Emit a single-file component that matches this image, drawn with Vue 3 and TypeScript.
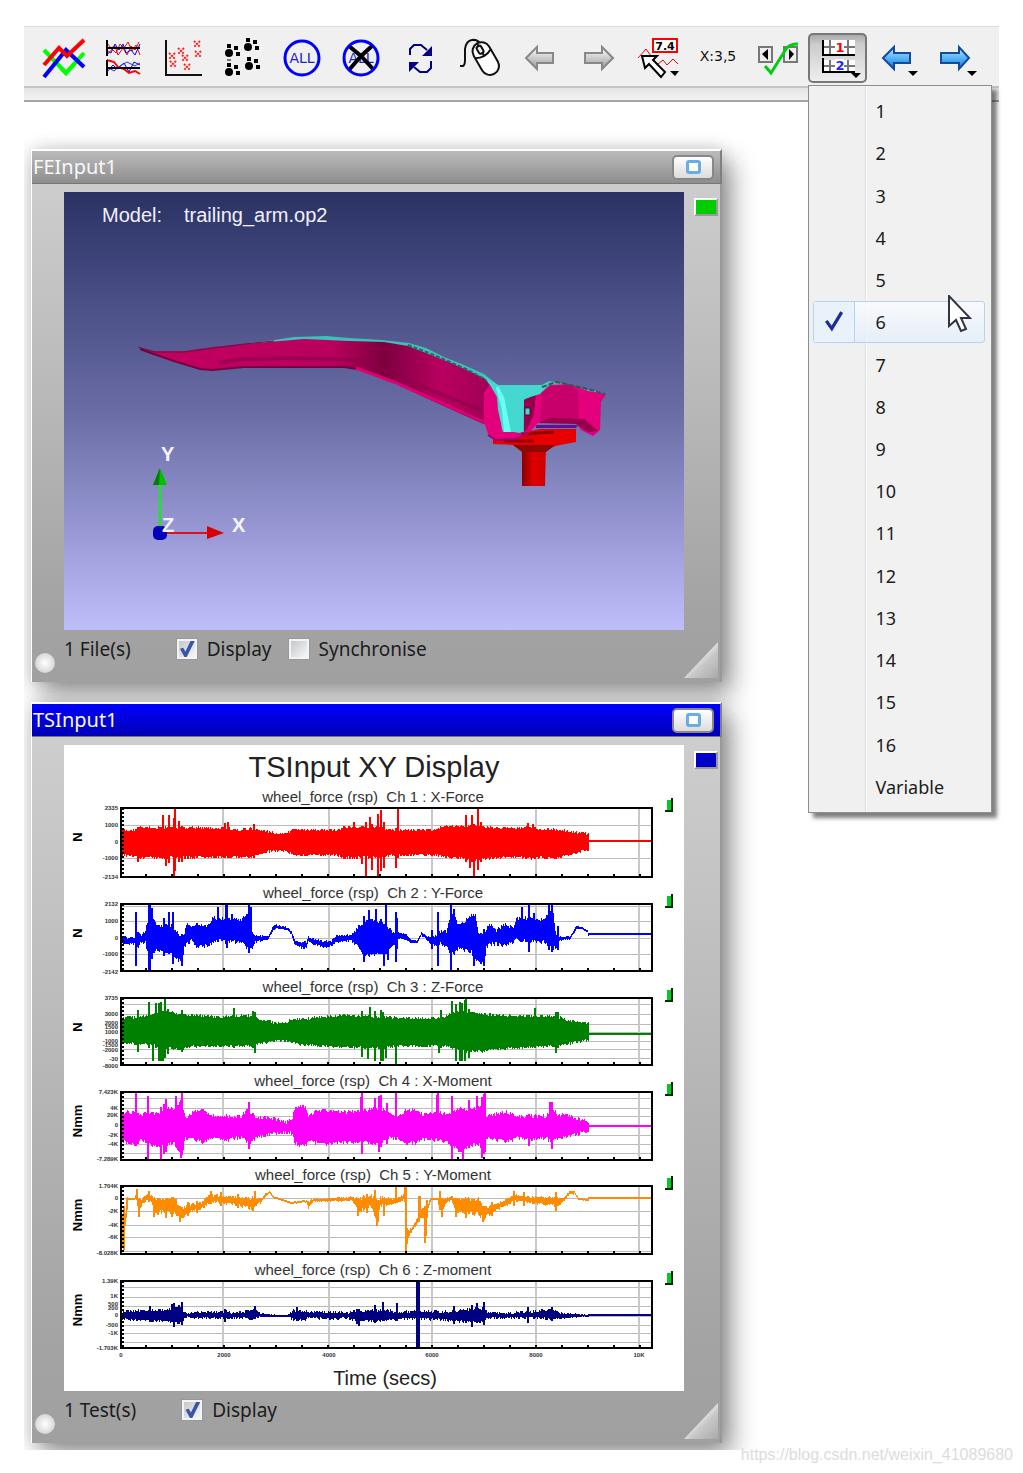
<script setup lang="ts">
import { ref } from 'vue'

type Span = [x: number, top: number, bottom: number]

interface Channel {
  title: string
  unit: string
  y: number
  height: number
  color: string
  rest: number
  grain: number
  grid: number[]
  ticks: [at: number, label: string][]
  envelope: Span[]
  spikes: Span[]
}

const layouts = [...Array.from({ length: 16 }, (_, i) => String(i + 1)), 'Variable']
const selected = ref('6')
const feDisplay = ref(true)
const feSync = ref(false)
const tsDisplay = ref(true)

const plotLeft = 57
const plotWidth = 531
const dataEnd = 467
const columns = [102, 208, 311, 415, 518]
const minorTicks = Array.from({ length: 20 }, (_, i) => (i + 1) * 26 - 1)
const timeLabels: [number, string][] = [[0, '0'], [103, '2000'], [208, '4000'], [311, '6000'], [415, '8000'], [518, '10K']]

const channels: Channel[] = [
  {
    title: 'wheel_force (rsp)\u00a0 Ch 1 : X-Force', unit: 'N', y: 63, height: 69, color: '#ff0000', rest: 33, grain: 3,
    grid: [17, 50],
    ticks: [[0, '2335'], [17, '1000'], [34, '0'], [50, '-1000'], [69, '-2134']],
    envelope: [[0, 22, 47], [12, 22, 48], [18, 19, 50], [100, 20, 49], [120, 22, 49], [130, 20, 49], [145, 23, 44], [152, 25, 43], [165, 25, 43], [173, 22, 47], [215, 22, 47], [222, 19, 50], [260, 19, 49], [270, 22, 47], [315, 22, 47], [322, 18, 49], [360, 18, 52], [370, 20, 50], [400, 20, 49], [410, 19, 51], [420, 22, 49], [430, 21, 51], [440, 22, 49], [450, 24, 46], [462, 25, 43], [467, 26, 42]],
    spikes: [[41, 7, 50], [44, 20, 58], [47, 7, 55], [52, 10, 69], [53, 0, 63], [57, 13, 54], [60, 18, 54], [103, 15, 50], [106, 14, 50], [16, 20, 54], [132, 16, 50], [232, 14, 50], [240, 18, 56], [244, 14, 69], [248, 9, 50], [250, 16, 62], [256, 6, 69], [259, 2, 63], [262, 14, 60], [274, 20, 60], [276, 0, 50], [344, 7, 54], [348, 18, 60], [350, 7, 54], [352, 16, 69], [356, 0, 62], [359, 14, 54], [406, 15, 50], [411, 16, 50]],
  },
  {
    title: 'wheel_force (rsp)\u00a0 Ch 2 : Y-Force', unit: 'N', y: 159, height: 67, color: '#0000ff', rest: 30, grain: 4,
    grid: [2, 17, 34, 50],
    ticks: [[0, '2132'], [17, '1000'], [34, '0'], [50, '-1000'], [68, '-2142']],
    envelope: [[0, 31, 39], [6, 34, 40], [13, 33, 40], [16, 28, 44], [19, 31, 39], [24, 27, 38], [27, 14, 52], [31, 12, 50], [35, 22, 45], [42, 22, 48], [50, 22, 50], [54, 26, 54], [61, 34, 58], [63, 28, 44], [65, 19, 40], [70, 22, 37], [75, 20, 42], [85, 22, 42], [92, 14, 38], [100, 14, 36], [110, 15, 38], [120, 16, 38], [126, 8, 44], [129, 10, 44], [131, 28, 44], [134, 32, 38], [147, 32, 35], [152, 22, 26], [155, 21, 24], [165, 23, 26], [170, 27, 30], [173, 36, 40], [180, 38, 44], [185, 38, 44], [187, 33, 37], [192, 35, 40], [200, 37, 43], [210, 37, 42], [215, 32, 38], [230, 30, 37], [236, 24, 42], [242, 18, 50], [247, 16, 52], [258, 18, 48], [264, 22, 48], [272, 28, 42], [277, 28, 34], [285, 31, 36], [290, 36, 39], [296, 36, 39], [300, 28, 31], [305, 32, 36], [310, 34, 40], [320, 27, 40], [325, 28, 43], [329, 10, 50], [332, 10, 50], [337, 22, 44], [350, 12, 48], [354, 12, 56], [357, 30, 58], [363, 32, 60], [365, 26, 44], [368, 19, 40], [375, 26, 40], [383, 20, 42], [392, 24, 38], [395, 15, 36], [410, 14, 38], [424, 16, 38], [427, 6, 44], [432, 8, 44], [434, 28, 44], [438, 33, 37], [449, 32, 35], [455, 22, 25], [460, 23, 25], [466, 26, 28], [467, 29, 32]],
    spikes: [[14, 8, 62], [27, 0, 68], [28, 0, 68], [30, 4, 55], [42, 14, 52], [47, 8, 50], [51, 8, 60], [60, 30, 62], [96, 3, 38], [104, 0, 40], [105, 0, 44], [110, 10, 36], [127, 0, 49], [129, 3, 44], [242, 12, 58], [247, 6, 50], [254, 5, 48], [259, 15, 50], [264, 0, 50], [262, 20, 62], [266, 25, 56], [274, 8, 58], [275, 14, 45], [310, 26, 45], [316, 8, 62], [329, 0, 68], [332, 5, 50], [352, 20, 62], [362, 25, 62], [400, 3, 38], [407, 0, 48], [412, 9, 36], [427, 0, 46], [430, 0, 48], [436, 22, 46]],
  },
  {
    title: 'wheel_force (rsp)\u00a0 Ch 3 : Z-Force', unit: 'N', y: 253, height: 67, color: '#008000', rest: 36, grain: 3,
    grid: [6, 16, 26, 34, 43, 51, 60],
    ticks: [[0, '3735'], [16, '3000'], [25, '2000'], [29, '1500'], [34, '1000'], [43, '-1000'], [47, '-1500'], [52, '-2000'], [61, '-30'], [68, '-8000']],
    envelope: [[0, 20, 45], [15, 19, 46], [30, 17, 46], [35, 14, 48], [45, 13, 50], [60, 16, 51], [70, 17, 49], [100, 19, 48], [130, 17, 48], [136, 21, 46], [145, 23, 45], [155, 25, 43], [165, 24, 43], [172, 21, 45], [180, 21, 47], [220, 17, 49], [255, 19, 50], [280, 20, 48], [320, 20, 48], [333, 14, 50], [345, 13, 52], [360, 16, 54], [372, 17, 51], [400, 18, 50], [435, 18, 48], [445, 22, 46], [455, 24, 44], [467, 25, 42]],
    spikes: [[16, 12, 54], [27, 4, 50], [31, 16, 63], [34, 5, 50], [37, 5, 63], [39, 4, 63], [41, 14, 63], [43, 1, 60], [46, 11, 56], [60, 12, 54], [112, 10, 50], [131, 13, 50], [133, 14, 55], [240, 13, 59], [246, 18, 61], [248, 9, 50], [253, 13, 63], [259, 12, 63], [261, 14, 63], [264, 20, 60], [274, 19, 68], [317, 20, 55], [319, 12, 50], [330, 3, 50], [334, 6, 63], [338, 4, 63], [340, 5, 63], [343, 2, 63], [344, 1, 55], [347, 11, 60], [413, 10, 50], [434, 14, 55], [436, 14, 50]],
  },
  {
    title: 'wheel_force (rsp)\u00a0 Ch 4 : X-Moment', unit: 'Nmm', y: 347, height: 68, color: '#ff00ff', rest: 34, grain: 4,
    grid: [6, 16, 24, 34, 43, 52, 61],
    ticks: [[0, '7.423K'], [16, '4K'], [23, '20K'], [33, '0'], [43, '-2K'], [52, '-4K'], [67, '-7.289K']],
    envelope: [[0, 20, 48], [10, 20, 52], [15, 18, 54], [18, 24, 48], [25, 20, 50], [35, 22, 55], [45, 16, 54], [52, 16, 50], [57, 12, 60], [61, 12, 62], [64, 26, 46], [72, 20, 47], [82, 18, 51], [90, 23, 46], [105, 24, 48], [120, 25, 45], [125, 18, 50], [130, 21, 50], [135, 26, 46], [150, 26, 42], [165, 30, 40], [170, 28, 41], [174, 16, 52], [184, 14, 54], [187, 24, 48], [195, 19, 51], [205, 18, 52], [220, 20, 50], [240, 19, 50], [259, 16, 53], [266, 21, 46], [280, 24, 47], [285, 18, 51], [295, 18, 51], [302, 23, 47], [315, 19, 48], [326, 22, 50], [340, 16, 60], [350, 18, 53], [358, 15, 52], [361, 8, 62], [364, 24, 46], [385, 20, 50], [395, 24, 46], [410, 24, 48], [425, 24, 46], [430, 14, 50], [436, 22, 46], [450, 25, 44], [467, 30, 39]],
    spikes: [[14, 1, 54], [26, 4, 67], [39, 15, 68], [42, 12, 62], [44, 7, 60], [54, 4, 54], [59, 8, 66], [60, 1, 60], [127, 10, 57], [239, 5, 48], [240, 0, 62], [253, 6, 52], [257, 4, 60], [259, 3, 55], [265, 11, 52], [274, 0, 48], [315, 3, 46], [316, 0, 48], [330, 4, 68], [341, 20, 68], [347, 8, 56], [355, 4, 52], [360, 5, 66], [362, 2, 62], [363, 0, 60], [407, 22, 54], [428, 10, 46], [430, 10, 57]],
  },
  {
    title: 'wheel_force (rsp)\u00a0 Ch 5 : Y-Moment', unit: 'Nmm', y: 441, height: 68, color: '#ff8c00', rest: 12, grain: 4,
    grid: [12, 25, 39, 51, 65],
    ticks: [[0, '1.704K'], [12, '0'], [25, '-2K'], [39, '-4K'], [51, '-6K'], [67, '-8.028K']],
    envelope: [[0, 48, 55], [3, 40, 48], [5, 14, 32], [7, 12, 13], [13, 12, 13], [15, 6, 14], [17, 14, 26], [20, 13, 20], [25, 9, 14], [30, 10, 16], [32, 13, 26], [54, 12, 27], [58, 22, 33], [62, 21, 31], [70, 18, 25], [80, 17, 23], [86, 10, 18], [90, 9, 16], [110, 11, 18], [130, 12, 22], [140, 12, 16], [144, 8, 11], [148, 5, 7], [152, 10, 12], [170, 16, 17], [185, 14, 16], [187, 15, 23], [192, 13, 16], [210, 12, 15], [230, 11, 15], [238, 12, 25], [250, 10, 20], [255, 14, 34], [259, 11, 20], [270, 13, 18], [278, 11, 16], [283, 8, 14], [286, 46, 56], [290, 42, 46], [296, 32, 38], [299, 22, 32], [303, 22, 30], [306, 18, 26], [310, 12, 13], [316, 12, 14], [318, 8, 22], [321, 14, 24], [325, 12, 17], [330, 10, 14], [334, 13, 26], [357, 13, 28], [362, 22, 32], [375, 18, 24], [385, 14, 20], [392, 9, 15], [410, 11, 17], [435, 12, 20], [442, 12, 16], [448, 5, 8], [453, 5, 8], [457, 12, 13], [467, 13, 14]],
    spikes: [[1, 28, 62], [2, 20, 64], [15, 3, 14], [17, 13, 31], [27, 5, 14], [32, 12, 31], [36, 12, 29], [44, 12, 32], [50, 11, 31], [58, 20, 36], [66, 16, 30], [75, 15, 27], [89, 5, 18], [99, 6, 20], [116, 8, 22], [133, 5, 16], [131, 12, 25], [236, 12, 30], [245, 8, 27], [253, 4, 26], [255, 14, 40], [256, 14, 36], [262, 12, 30], [274, 1, 14], [283, 1, 16], [284, 0, 68], [285, 42, 58], [297, 10, 34], [298, 10, 30], [303, 20, 57], [304, 22, 50], [305, 14, 32], [318, 5, 24], [320, 12, 31], [334, 12, 31], [344, 12, 32], [361, 20, 36], [362, 20, 34], [370, 16, 30], [392, 5, 20], [402, 6, 20], [434, 6, 25]],
  },
  {
    title: 'wheel_force (rsp)\u00a0 Ch 6 : Z-moment', unit: 'Nmm', y: 536, height: 67, color: '#000080', rest: 34, grain: 3,
    grid: [6, 16, 25, 35, 44, 52, 61],
    ticks: [[0, '1.39K'], [15, '1K'], [23, '500'], [27, '200'], [34, '0'], [44, '-500'], [52, '-1K'], [67, '-1.703K']],
    envelope: [[0, 31, 38], [10, 30, 39], [30, 29, 40], [45, 29, 40], [52, 26, 42], [60, 27, 42], [63, 31, 37], [66, 33, 36], [72, 31, 37], [100, 31, 37], [106, 30, 38], [110, 32, 37], [126, 30, 37], [133, 29, 38], [138, 32, 36], [155, 34, 36], [166, 34, 35], [172, 29, 39], [182, 30, 39], [187, 31, 37], [215, 31, 38], [225, 32, 37], [235, 30, 40], [240, 30, 40], [262, 29, 40], [280, 31, 38], [300, 30, 38], [325, 31, 39], [335, 30, 40], [350, 28, 41], [362, 27, 41], [366, 31, 37], [385, 32, 37], [405, 31, 37], [430, 29, 38], [438, 32, 38], [455, 33, 36], [467, 34, 35]],
    spikes: [[28, 25, 41], [50, 23, 40], [52, 22, 46], [57, 24, 43], [60, 21, 44], [103, 28, 41], [133, 25, 38], [175, 26, 40], [235, 28, 43], [237, 28, 45], [253, 24, 42], [261, 21, 40], [275, 22, 40], [295, 0, 68], [296, 0, 68], [297, 0, 68], [332, 25, 43], [350, 24, 46], [355, 22, 42], [362, 21, 44], [406, 26, 42], [430, 26, 40]],
  },
]

function trace(channel: Channel, seed: number): string {
  let state = seed
  const random = () => {
    state = (state * 1103515245 + 12345) % 2147483648
    return state / 2147483648
  }
  const bar = (x: number, top: number, bottom: number, width: number) => {
    const from = channel.y + Math.max(0, Math.round(top))
    const to = channel.y + Math.min(channel.height, Math.round(Math.max(bottom, top + 2)))
    return `M${plotLeft + x} ${from}h${width}V${to}h-${width}z`
  }
  const parts: string[] = []
  let segment = 0
  for (let x = 0; x <= dataEnd; x++) {
    while (segment < channel.envelope.length - 2 && channel.envelope[segment + 1][0] <= x) segment++
    const a = channel.envelope[segment]
    const b = channel.envelope[segment + 1]
    const t = (x - a[0]) / (b[0] - a[0])
    let top = a[1] + (b[1] - a[1]) * t
    let bottom = a[2] + (b[2] - a[2]) * t
    const grain = Math.min(channel.grain, (bottom - top) * 0.4)
    top += (random() - 0.5) * grain
    bottom += (random() - 0.5) * grain
    parts.push(bar(x, top, bottom, 1))
  }
  for (const [x, top, bottom] of channel.spikes) parts.push(bar(x, top, bottom, 2))
  return parts.join('')
}

const traces = channels.map((c, i) => trace(c, 97 + i * 31))

const scatter = [[14, 20], [15, 28], [23, 15], [27, 22], [29, 31], [39, 8], [40, 18]]
const clusters = [[12, 17], [31, 11], [12, 36], [32, 30]]
</script>

<template>
  <main class="page">
    <header class="toolbar" role="toolbar" aria-label="Graph tools">
      <button class="tool" aria-label="Overlay plots">
        <svg viewBox="0 0 50 44" fill="none" stroke-width="4">
          <path d="M5 14 27 37 45 17" stroke="#0f0" />
          <path d="M5 41 27 14 45 31" stroke="#00f" />
          <path d="M22 32 27 37 36 27" stroke="#0f0" />
          <path d="M5 29 20 12 28 20 45 4" stroke="#f00" />
        </svg>
      </button>
      <button class="tool" aria-label="Stacked plots">
        <svg viewBox="0 0 50 44" fill="none" stroke-width="1">
          <path d="M9 19 14 13 18 17 22 8 26 12 30 6 34 15 38 9 42 19M9 7 13 12 17 10 20 19 25 12 29 19 33 10 37 14 41 6" stroke="#f00" stroke-width="1" />
          <path d="M9 15 13 17 17 8 21 14 25 8 28 17 33 14 37 19 42 8M9 36 15 29 19 33 26 27 31 36 36 26 42 29" stroke="#00f" />
          <path d="M9 24 16 26 20 31 26 33 31 37 37 35 42 38" stroke="#f00" stroke-width="2" />
          <path d="M9 31 16 35 22 30 29 26 37 30 42 27" stroke="#33d" />
          <path d="M9 4V20M9 12H42M9 24V40M9 32H42" stroke="#000" stroke-width="2" />
        </svg>
      </button>
      <button class="tool" aria-label="Scatter plot">
        <svg viewBox="0 0 50 44" fill="none">
          <path d="M8 4V39H44" stroke="#111" stroke-width="2" />
          <path v-for="(p, i) in scatter" :key="i" :d="`M${p[0] - 3} ${p[1] - 3}l6 6m0-6l-6 6`" stroke="#f22" stroke-width="2" stroke-dasharray="2 1" />
        </svg>
      </button>
      <button class="tool" aria-label="Point clusters">
        <svg viewBox="0 0 50 44">
          <g v-for="(c, i) in clusters" :key="i">
            <circle :cx="c[0]" :cy="c[1]" r="4" />
            <path :d="`M${c[0] - 2} ${c[1] - 9}h4v4h-4zm7 2h4v4h-4zm2 6h4v4h-4z`" />
          </g>
          <path d="M10 24h4" stroke="#000" />
        </svg>
      </button>
      <button class="tool" aria-label="Select all">
        <svg viewBox="0 0 50 44">
          <circle cx="25" cy="22" r="17" fill="none" stroke="#00f" stroke-width="3" />
          <text x="25" y="27" text-anchor="middle" font-size="14" fill="#22c">ALL</text>
        </svg>
      </button>
      <button class="tool" aria-label="Select none">
        <svg viewBox="0 0 50 44">
          <text x="25" y="27" text-anchor="middle" font-size="14" fill="#22c">ALL</text>
          <path d="M13 10 25 20 36 10M13 34 25 20 37 33" fill="none" stroke="#000" stroke-width="4" />
          <circle cx="25" cy="22" r="17" fill="none" stroke="#00f" stroke-width="3" />
        </svg>
      </button>
      <button class="tool" aria-label="Refresh">
        <svg viewBox="0 0 50 44" fill="#000080">
          <path d="M14 19V13L18 9H25L31 14M35 25V32L31 36H24L18 31" fill="none" stroke="#000080" stroke-width="2" />
          <path d="M36 10V20H26zM13 36V26H23z" />
        </svg>
      </button>
      <button class="tool" aria-label="Mouse mode">
        <svg viewBox="0 0 50 44" fill="none" stroke="#111" stroke-width="2">
          <path d="M5 30H8Q10 29 10 24V13Q11 5 17 4Q24 3 26 10" />
          <g transform="rotate(-30 31 23)">
            <rect x="22" y="5" width="18" height="35" rx="9" fill="#fff" />
            <path d="M22 17Q31 22 40 17M31 5V19" />
            <rect x="28" y="8" width="5" height="8" rx="2" fill="#eee" />
          </g>
        </svg>
      </button>
      <button class="tool" aria-label="Previous" disabled>
        <svg viewBox="0 0 50 44">
          <defs>
            <linearGradient id="grey" x2="0" y2="1"><stop offset="0" stop-color="#fff" /><stop offset="1" stop-color="#999" /></linearGradient>
            <linearGradient id="sky" x2="0" y2="1"><stop offset="0" stop-color="#aaf0ff" /><stop offset="1" stop-color="#0a78e8" /></linearGradient>
          </defs>
          <path d="M11 22 22 11V17H38V27H22V33z" fill="url(#grey)" stroke="#888" stroke-width="2" />
        </svg>
      </button>
      <button class="tool" aria-label="Next" disabled>
        <svg viewBox="0 0 50 44"><path d="M39 22 28 11V17H11V27H28V33z" fill="url(#grey)" stroke="#888" stroke-width="2" /></svg>
      </button>
      <button class="tool" aria-label="Point value">
        <svg viewBox="0 0 50 44">
          <path d="M4 22 12 13 20 24 24 28 29 24 33 29 39 23 44 28" fill="none" stroke="#f00" stroke-width="1" />
          <rect x="19" y="3" width="24" height="13" fill="#fff" stroke="#f00" stroke-width="2" />
          <text x="31" y="14" text-anchor="middle" font-size="11" font-weight="bold">7.4</text>
          <path d="M8 20H23L19 24 31 36 27 41 15 28 11 32z" fill="#fff" stroke="#000" stroke-width="2" />
          <path d="M36 35h9l-4 5z" />
        </svg>
      </button>
      <button class="tool" aria-label="Coordinates">
        <svg viewBox="0 0 50 44"><text x="25" y="25" text-anchor="middle" font-size="14" fill="#111">X:3,5</text></svg>
      </button>
      <button class="tool" aria-label="Step and accept">
        <svg viewBox="0 0 50 44">
          <path d="M6 11H19V26H6zM31 11H44V26H31z" fill="#eee" stroke="#777" stroke-width="2" />
          <path d="M15 13V24L9 18zM36 13V24L41 18z" />
          <path d="M12 30 18 37 33 13Q36 8 45 8" fill="none" stroke="#0c1" stroke-width="3" />
        </svg>
      </button>
      <div class="dropdown">
        <button class="tool pressed" aria-label="Plots per page" aria-haspopup="menu" aria-expanded="true">
          <svg viewBox="0 0 50 44">
            <path d="M11 4H43V18H11zM11 24H43V36H11z" fill="#fff" />
            <path d="M18 4V18M36 4V18M18 24V36M36 24V36M12 11H43M12 30H43" fill="none" stroke="#777" stroke-width="2" />
            <path d="M11 4V19H43M11 22V36H43" fill="none" stroke="#000" stroke-width="2" />
            <path d="M23 5h9v12h-9zM23 23h9v12h-9z" fill="#fff" />
            <text x="28" y="16" text-anchor="middle" font-size="13" font-weight="bold" fill="#f00">1</text>
            <text x="28" y="34" text-anchor="middle" font-size="13" font-weight="bold" fill="#22f">2</text>
            <path d="M39 37h10l-5 5z" />
          </svg>
        </button>
        <ul class="menu" role="menu">
          <li v-for="item in layouts" :key="item" role="none">
            <button class="menu-item" :class="{ chosen: item === selected }" role="menuitemradio" :aria-checked="item === selected" @click="selected = item">
              <span class="mark">
                <svg v-if="item === selected" viewBox="0 0 20 20"><path d="M3 9 8 16 17 1" fill="none" stroke="#1c2c9c" stroke-width="3" /></svg>
              </span>
              <span>{{ item }}</span>
            </button>
          </li>
        </ul>
        <svg class="pointer" viewBox="0 0 24 38">
          <path d="M1 1V31L8 25 13 36 18 34 13 23H22z" fill="#fff" stroke="#334" stroke-width="2" />
        </svg>
      </div>
      <button class="tool" aria-label="Back">
        <svg viewBox="0 0 50 44">
          <path d="M11 22 22 11V17H38V27H22V33z" fill="url(#sky)" stroke="#124a9c" stroke-width="2" />
          <path d="M36 35h10l-5 5z" />
        </svg>
      </button>
      <button class="tool" aria-label="Forward">
        <svg viewBox="0 0 50 44">
          <path d="M38 22 28 11V17H10V27H28V33z" fill="url(#sky)" stroke="#124a9c" stroke-width="2" />
          <path d="M36 35h10l-5 5z" />
        </svg>
      </button>
    </header>
    <div class="strip"></div>

    <section class="workspace">
      <article class="window">
        <header class="titlebar">
          <h2>FEInput1</h2>
          <button class="maximise" aria-label="Maximise FEInput1"><i></i></button>
        </header>
        <div class="body">
          <div class="left"><i class="pin"></i></div>
          <svg class="canvas" viewBox="0 0 620 438" role="img" aria-label="Trailing arm model">
            <defs>
              <linearGradient id="depth" x2="0" y2="1"><stop offset="0" stop-color="#2a3264" /><stop offset="0.5" stop-color="#6a6ca6" /><stop offset="1" stop-color="#bebefa" /></linearGradient>
              <linearGradient id="arm"><stop offset="0" stop-color="#c40060" /><stop offset="0.55" stop-color="#b8005c" /><stop offset="0.69" stop-color="#7c003e" /><stop offset="0.85" stop-color="#b80060" /><stop offset="1" stop-color="#a00054" /></linearGradient>
              <linearGradient id="stem"><stop offset="0" stop-color="#800" /><stop offset="0.5" stop-color="#e00000" /><stop offset="1" stop-color="#d00000" /></linearGradient>
            </defs>
            <rect width="620" height="438" fill="url(#depth)" />
            <text x="38" y="30" font-size="20" fill="#f0f0fa">Model:</text>
            <text x="120" y="30" font-size="20" fill="#f0f0fa">trailing_arm.op2</text>
            <path d="M172 153 210 148 230 145 262 144 285 146 318 148 345 151 362 156 380 165 400 173 420 182 434 193H478L486 189 500 192 520 197 537 200 530 206H480L462 245H438L424 200 340 165 230 153z" fill="#3cc0b8" />
            <path d="M74 155 90 159 120 159 148 155 180 152 205 150 240 147 285 149 320 150 344 154 362 161 385 170 405 179 420 186 430 198 424 232 400 223 360 205 325 188 300 178 280 175H180L160 176 148 178 136 177 110 169 84 160z" fill="url(#arm)" />
            <path d="M76 157 84 160 110 169 136 177 148 178 180 175H280L300 178 330 190 420 231" fill="none" stroke="#780040" stroke-width="2" />
            <path d="M155 171 180 167 230 166 280 167 310 173 340 187 418 219" fill="none" stroke="#8c0048" stroke-width="4" opacity="0.6" />
            <path d="M292 176 330 190 422 231" fill="none" stroke="#e00074" stroke-width="3" />
            <path d="M74 155 90 160 120 160 150 156 180 152 210 149" fill="none" stroke="#5d1846" stroke-width="1" />
            <path d="M344 153 370 163 402 177 424 189" fill="none" stroke="#355f60" stroke-width="2" stroke-dasharray="4 2" />
            <path d="M429 247 476 237H512V250L491 254 482 259 481 294H458V259L449 253 429 252z" fill="#e80000" />
            <path d="M449 253H491L482 260H458z" fill="#8c0800" />
            <path d="M458 260h23v34h-23z" fill="url(#stem)" />
            <path d="M457 242 490 240M440 249H470" stroke="#930000" stroke-width="3" />
            <path d="M420 201 426 192 434 202 438 238 460 242 460 208 478 200 486 193 506 192 524 199 542 202 537 210 536 238 529 244 517 238 512 231H474L464 242 452 247H432L424 242 420 230z" fill="#e4007a" />
            <path d="M478 201 486 194 506 193 514 199 515 231H476z" fill="#c8006c" />
            <path d="M460 208 472 202 470 222 464 236 460 240zM474 231 486 226 520 227 534 239 524 240 512 232z" fill="#94004c" />
            <path d="M420 184 434 193H478L486 189 476 202 460 207 459 240H439L434 218 433 205 426 193z" fill="#44d8d0" />
            <path d="M432 196 438 218 440 240H447L440 205 434 194z" fill="#68fff4" />
            <path d="M461 216h5v7h-5z" fill="#44d8d0" stroke="#600040" stroke-width="1" />
            <path d="M472 233H514L512 236H472z" fill="#601098" />
            <path d="M424 243 432 248 452 247 464 240" fill="none" stroke="#a00070" stroke-width="2" />
            <path d="M478 195 492 190 520 196 541 202" fill="none" stroke="#305858" stroke-width="2" stroke-dasharray="5 2" />
            <path d="M96 341V290" stroke="#2ad840" stroke-width="3" />
            <path d="M96 276 103 293H89z" fill="#00c000" />
            <path d="M96 276 95 293H89z" fill="#067a06" />
            <path d="M96 341H145" stroke="#e01020" stroke-width="2" />
            <path d="M143 334 160 341 143 347z" fill="#d80000" />
            <rect x="89" y="334" width="14" height="14" rx="5" fill="#0000b8" />
            <g font-size="20" font-weight="bold" fill="#f4f4ff">
              <text x="97" y="269">Y</text>
              <text x="98" y="340">Z</text>
              <text x="168" y="340">X</text>
            </g>
          </svg>
          <div class="right"><i class="swatch green"></i><i class="grip"></i></div>
          <footer class="status">
            <span class="count">1 File(s)</span>
            <label><input v-model="feDisplay" type="checkbox" />Display</label>
            <label><input v-model="feSync" type="checkbox" />Synchronise</label>
          </footer>
        </div>
      </article>

      <article class="window active">
        <header class="titlebar">
          <h2>TSInput1</h2>
          <button class="maximise" aria-label="Maximise TSInput1"><i></i></button>
        </header>
        <div class="body">
          <div class="left"><i class="pin"></i></div>
          <svg class="canvas" viewBox="0 0 620 646" role="img" aria-label="TSInput XY Display">
            <rect width="620" height="646" fill="#fff" />
            <text x="310" y="32" text-anchor="middle" font-size="29" fill="#222">TSInput XY Display</text>
            <g v-for="(c, i) in channels" :key="c.title">
              <text x="309" :y="c.y - 6" text-anchor="middle" font-size="15" fill="#333">{{ c.title }}</text>
              <text :transform="`translate(18 ${c.y + 29}) rotate(-90)`" text-anchor="middle" font-size="13" font-weight="bold">{{ c.unit }}</text>
              <g shape-rendering="crispEdges">
                <path v-for="g in c.grid" :key="g" :d="`M${plotLeft} ${c.y + g}h${plotWidth}`" stroke="#bbb" stroke-width="1" />
                <path v-for="g in columns" :key="g" :d="`M${plotLeft + g} ${c.y}v${c.height}`" stroke="#c8c8c8" stroke-width="2" />
                <path :d="traces[i]" :fill="c.color" />
                <path :d="`M${plotLeft + dataEnd} ${c.y + c.rest}H${plotLeft + plotWidth}`" :stroke="c.color" stroke-width="2" />
                <rect :x="plotLeft" :y="c.y" :width="plotWidth" :height="c.height" fill="none" stroke="#000" stroke-width="2" />
                <path :d="`M${plotLeft + 2} ${c.y}v${c.height}`" stroke="#000" stroke-width="2" stroke-dasharray="2 2" />
                <path v-for="t in minorTicks" :key="t" :d="`M${plotLeft + t} ${c.y + c.height - 3}v3`" stroke="#000" stroke-width="2" />
                <path :d="`M607 ${c.y - 10}h2v14h-8v-2h6z`" fill="#042b04" />
                <path :d="`M603 ${c.y - 8}h4v10h-4z`" fill="#0c2" />
              </g>
              <text v-for="t in c.ticks" :key="t[1]" :x="plotLeft - 3" :y="c.y + t[0] + 2" text-anchor="end" font-size="6" font-weight="bold" fill="#333">{{ t[1] }}</text>
            </g>
            <text v-for="t in timeLabels" :key="t[1]" :x="plotLeft + t[0]" y="612" text-anchor="middle" font-size="6" font-weight="bold" fill="#334">{{ t[1] }}</text>
            <text x="321" y="640" text-anchor="middle" font-size="20" fill="#222">Time (secs)</text>
          </svg>
          <div class="right"><i class="swatch blue"></i><i class="grip"></i></div>
          <footer class="status">
            <span class="count">1 Test(s)</span>
            <label><input v-model="tsDisplay" type="checkbox" />Display</label>
          </footer>
        </div>
      </article>
    </section>
    <p class="credit">https://blog.csdn.net/weixin_41089680</p>
  </main>
</template>

<style>
body {
  margin: 0;
  background: #fff;
}
</style>

<style scoped>
.page {
  padding: 26px 24px 0;
  font-family: "Noto Sans", "DejaVu Sans", sans-serif;
  color: #1c1c1c;
}

button {
  border: 0;
  padding: 0;
  background: none;
  font: inherit;
  color: inherit;
}

.toolbar {
  display: grid;
  grid-template-columns: repeat(16, 1fr);
  padding: 6px 13px 3px 10px;
  border-top: 1px solid #ddd;
  border-bottom: 2px solid #c4c4c4;
  background: #f0f0f0;
}

.tool {
  display: flex;
  align-items: center;
  justify-content: center;
  width: 100%;
  height: 50px;
}

.tool svg {
  flex: none;
  width: 50px;
  height: 44px;
  font-family: "DejaVu Sans", sans-serif;
}

.dropdown {
  position: relative;
  z-index: 2;
}

.pressed {
  border: 2px solid #777;
  border-radius: 5px;
  box-sizing: border-box;
  background: linear-gradient(#aaa, #ccc 20%, #eee);
}

.menu {
  position: absolute;
  top: 52px;
  left: 0;
  display: grid;
  grid-auto-rows: 1fr;
  box-sizing: border-box;
  width: 184px;
  min-height: 728px;
  margin: 0;
  padding: 4px 6px 4px 4px;
  list-style: none;
  border: 1px solid #8e8e8e;
  background: linear-gradient(90deg, #f0f0f0 56px, #dedede 56px, #dedede 57px, #fff 57px, #fff 58px, #f1f1f1 58px);
  box-shadow: 5px 5px 4px rgba(0, 0, 0, 0.5);
  font-size: 18px;
}

.menu li {
  display: grid;
}

.menu-item {
  display: grid;
  grid-template-columns: 41px 1fr;
  column-gap: 21px;
  align-items: center;
  border: 1px solid transparent;
  border-radius: 3px;
  text-align: left;
}

.mark {
  display: flex;
  align-items: center;
  justify-content: center;
  align-self: stretch;
}

.mark svg {
  width: 22px;
  height: 22px;
}

.chosen {
  border-color: #b4d2f4;
  background: linear-gradient(rgba(250, 252, 255, 0.8), rgba(228, 238, 250, 0.8));
}

.chosen .mark {
  box-sizing: border-box;
  border-right: 1px solid #b4d2f4;
  background: #e9f1fb;
}

.pointer {
  position: absolute;
  top: 262px;
  left: 140px;
  width: 24px;
  height: 38px;
  pointer-events: none;
}

.strip {
  height: 12px;
  background: linear-gradient(#e4e4e4, #f2f2f2);
  border-bottom: 2px solid #a4a4a4;
}

.workspace {
  display: flex;
  flex-direction: column;
  gap: 20px;
  padding: 47px 277px 7px 7px;
  overflow: hidden;
}

.window {
  border-left: 1px solid #fff;
  background: linear-gradient(#d0d0d0, #bcbcbc 40%, #a4a4a4 85%, #a0a0a0);
  box-shadow: 0 0 16px rgba(0, 0, 0, 0.16), 10px 12px 24px rgba(0, 0, 0, 0.4);
}

.titlebar {
  display: flex;
  align-items: center;
  justify-content: space-between;
  box-sizing: border-box;
  height: 35px;
  padding: 0 6px 0 1px;
  border-top: 2px solid #fff;
  border-right: 2px solid #808080;
  border-bottom: 1px solid #777;
  background: linear-gradient(#bbb, #8e8e8e);
}

.active .titlebar {
  background: linear-gradient(#0000ff, #0000b4);
}

.titlebar h2 {
  margin: 0;
  font-size: 20px;
  line-height: 28px;
  font-weight: 400;
  color: #f8f8f8;
}

.maximise {
  display: flex;
  align-items: center;
  justify-content: center;
  box-sizing: border-box;
  width: 42px;
  height: 25px;
  border: 2px solid #888;
  border-radius: 5px;
  background: linear-gradient(#fff, #dcdcdc);
}

.maximise i {
  width: 9px;
  height: 8px;
  border: 3px solid #6aace4;
  border-radius: 3px;
  background: #fff;
}

.body {
  display: grid;
  grid-template-columns: 32px 1fr 38px;
  padding-top: 8px;
  box-shadow: inset -2px 0 #999;
}

.left {
  grid-row: 1 / 3;
  display: flex;
  align-items: flex-end;
  padding: 0 0 9px 3px;
}

.pin {
  width: 20px;
  height: 20px;
  border-radius: 50%;
  background: radial-gradient(#fff, #ddd 60%, #bbb);
}

.canvas {
  display: block;
  width: 100%;
  height: auto;
  font-family: "Liberation Sans", Arial, sans-serif;
}

.right {
  grid-column: 3;
  grid-row: 1 / 3;
  display: flex;
  flex-direction: column;
  align-items: flex-end;
  justify-content: space-between;
  padding: 6px 4px 4px 0;
}

.swatch {
  width: 20px;
  height: 14px;
  border: 2px solid #fff;
  border-right-color: #999;
  border-bottom-color: #999;
}

.green {
  background: #00cc00;
}

.blue {
  background: #0000c8;
}

.grip {
  width: 34px;
  height: 36px;
  background: linear-gradient(135deg, #eee 40%, #c8c8c8 60%, #aaa);
  clip-path: polygon(100% 0, 100% 100%, 0 100%);
}

.status {
  grid-column: 2;
  display: flex;
  align-items: center;
  gap: 16px;
  height: 38px;
  padding-bottom: 14px;
  font-size: 19px;
  white-space: nowrap;
}

.count {
  margin-right: 29px;
}

.status label {
  display: flex;
  align-items: center;
  gap: 9px;
}

.status input {
  appearance: none;
  position: relative;
  box-sizing: border-box;
  width: 22px;
  height: 22px;
  margin: 0;
  border: 3px solid #f4f4f4;
  outline: 1px solid #999;
  outline-offset: -1px;
  background: linear-gradient(135deg, #c4c8cc, #f6f6f6);
}

.status input:checked::after {
  content: "";
  position: absolute;
  inset: 0;
  background: #3a55a8;
  clip-path: polygon(8% 48%, 28% 42%, 42% 66%, 74% 0, 100% 0, 50% 100%, 36% 100%);
}

.credit {
  margin: -6px -14px 0 0;
  text-align: right;
  font-family: "Liberation Sans", Arial, sans-serif;
  font-size: 16px;
  line-height: 22px;
  color: #dcdcdc;
}
</style>
